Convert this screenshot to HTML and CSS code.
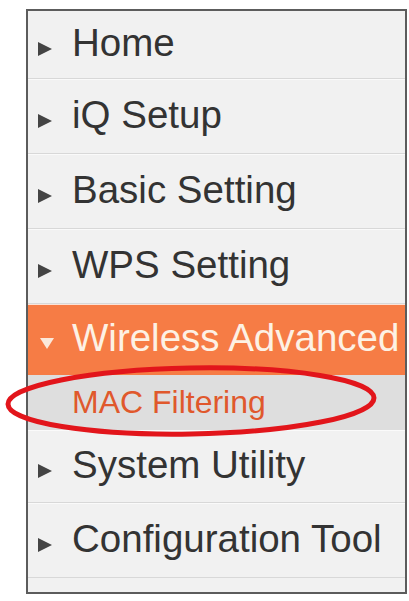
FILE: index.html
```html
<!DOCTYPE html>
<html>
<head>
    <title>Router Menu</title>
    <link rel="stylesheet" href="styles.css">
</head>
<body>
    <div class="page">
        <ul class="menu">
            <li class="item item-first"><span class="arrow"></span>Home</li>
            <li class="item"><span class="arrow"></span>iQ Setup</li>
            <li class="item"><span class="arrow"></span>Basic Setting</li>
            <li class="item"><span class="arrow"></span>WPS Setting</li>
            <li class="item active"><span class="arrow down"></span>Wireless Advanced</li>
            <li class="sub">MAC Filtering</li>
            <li class="item item-short"><span class="arrow"></span>System Utility</li>
            <li class="item"><span class="arrow"></span>Configuration Tool</li>
            <li class="filler"></li>
        </ul>

        <!-- highlight ring round the selected entry -->
        <svg class="ring" width="409" height="601" viewBox="0 0 409 601">
            <ellipse cx="191" cy="401" rx="183" ry="33" fill="none" stroke="#e2151b" stroke-width="5" transform="rotate(-1 191 401)"/>
        </svg>
    </div>
</body>
</html>
```

FILE: styles.css
```css
body {
    margin: 0;
    background-color: #fff;
    font-family: "Liberation Sans", Arial, sans-serif;
}
.page {
    position: relative;
    width: 409px;
    height: 601px;
    padding-top: 9px;
    box-sizing: border-box;
}
.menu {
    list-style: none;
    margin: 0 0 0 26px;
    padding: 0;
    width: 381px;
    border: 2px solid #5c5c5c;
    box-sizing: border-box;
    background-color: #f1f1f1;
}
.item {
    display: flex;
    align-items: center;
    height: 75px;
    box-sizing: border-box;
    padding-left: 10px;
    padding-bottom: 4px;
    border-top: 1px solid #fafafa;
    border-bottom: 1px solid #d8d8d8;
    font-size: 38.5px;
    color: #333;
    white-space: nowrap;
}
.item-first {
    height: 68px;
    border-top: none;
}
.item-short {
    height: 73px;
}
.arrow {
    width: 0;
    height: 0;
    margin-top: 12px;
    margin-right: 20px;
    border-left: 14px solid #444;
    border-top: 7px solid transparent;
    border-bottom: 7px solid transparent;
}
.item.active {
    height: 71px;
    background-color: #f67c45;
    border-top: 1px solid #fbe3d8;
    border-bottom: none;
    color: #fdf1e4;
}
.arrow.down {
    margin-top: 10px;
    margin-left: 2px;
    margin-right: 18px;
    border-top: 11px solid #fbe8da;
    border-left: 7px solid transparent;
    border-right: 7px solid transparent;
    border-bottom: none;
}
.sub {
    display: flex;
    align-items: center;
    height: 55px;
    box-sizing: border-box;
    padding-left: 44px;
    background-color: #dedede;
    font-size: 32px;
    color: #e0582c;
}
.filler {
    height: 14px;
}
.ring {
    position: absolute;
    left: 0;
    top: 0;
    pointer-events: none;
}
```
